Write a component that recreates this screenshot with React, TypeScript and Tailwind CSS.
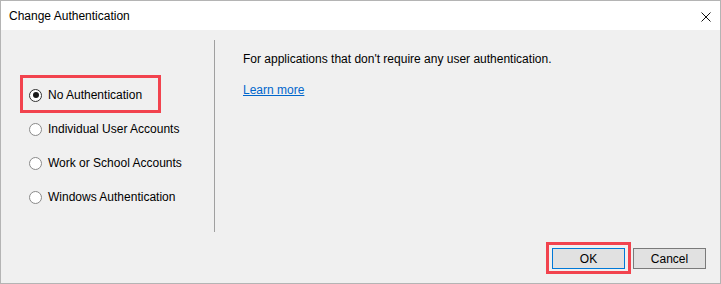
const options = [
  'No Authentication',
  'Individual User Accounts',
  'Work or School Accounts',
  'Windows Authentication',
]

function Radio({ checked }: { checked: boolean }) {
  return (
    <span
      className={`flex h-[13px] w-[13px] shrink-0 items-center justify-center rounded-full border bg-white ${
        checked ? 'border-[#333333]' : 'border-[#8a8a8a]'
      }`}
    >
      {checked && <span className="h-[6px] w-[6px] rounded-full bg-[#1a1a1a]" />}
    </span>
  )
}

export default function App() {
  return (
    <div
      className="flex h-[284px] w-[721px] flex-col border border-[#b4b4b4] bg-[#f0f0f0] text-[12px] text-black"
      style={{ fontFamily: '"Liberation Sans", Arial, sans-serif' }}
    >
      <div className="flex h-[29px] shrink-0 items-center justify-between bg-white pl-[8px] pr-[9px]">
        <span>Change Authentication</span>
        <svg width="10" height="10" viewBox="0 0 10 10" className="mt-[2px]">
          <path d="M0.5 0.5 L9.5 9.5 M9.5 0.5 L0.5 9.5" stroke="#111" strokeWidth="1" />
        </svg>
      </div>

      <div className="flex flex-1 flex-col">
        <div className="flex">
          <div className="flex w-[213px] flex-col pl-[28px] pt-[48px]">
            {options.map((label, i) => (
              <div key={label} className="relative flex h-[34px] items-center gap-[6px]">
                {i === 0 && (
                  <span className="pointer-events-none absolute left-[-9px] top-[-3px] h-[38px] w-[141px] border-[3px] border-[#f2434e]" />
                )}
                <Radio checked={i === 0} />
                <span>{label}</span>
              </div>
            ))}
          </div>
          <div className="mt-[10px] h-[192px] w-px bg-[#a0a0a0]" />
          <div className="flex flex-col pl-[28px] pt-[21px]">
            <span className="leading-[16px]">
              For applications that don't require any user authentication.
            </span>
            <a href="#" className="mt-[15px] leading-[16px] text-[#0066cc] underline">
              Learn more
            </a>
          </div>
        </div>

        <div className="mt-auto flex justify-end gap-[8px] pb-[14px] pr-[14px]">
          <div className="relative">
            <span className="pointer-events-none absolute left-[-6px] top-[-6px] h-[32px] w-[85px] border-[3px] border-[#f2434e]" />
            <button className="h-[21px] w-[73px] border border-[#0078d7] bg-[#e1e1e1]">OK</button>
          </div>
          <button className="h-[21px] w-[73px] border border-[#7a7a7a] bg-[#e1e1e1]">Cancel</button>
        </div>
      </div>
    </div>
  )
}
